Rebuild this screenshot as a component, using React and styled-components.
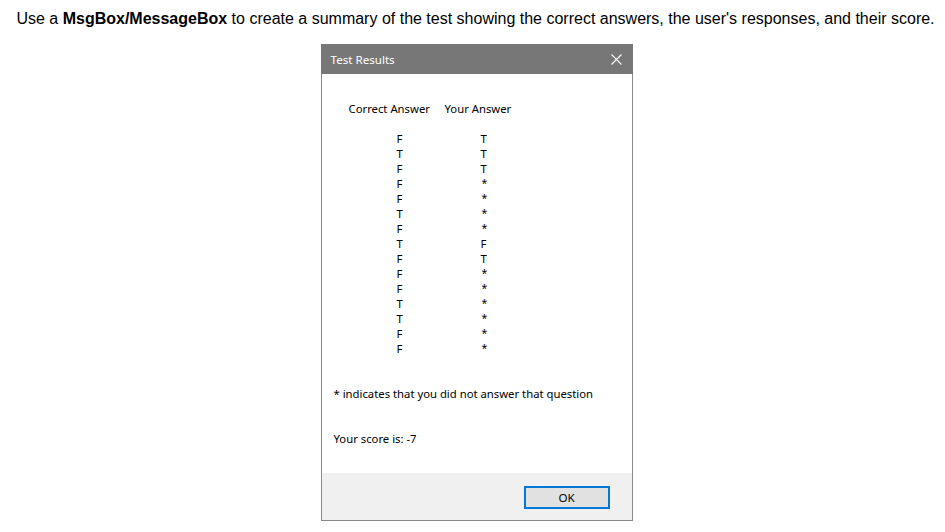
import React from "react";
import styled, { createGlobalStyle } from "styled-components";

const GlobalStyle = createGlobalStyle`
  body {
    margin: 0;
    background: #ffffff;
  }
`;

const answers = [
  ["F", "T"],
  ["T", "T"],
  ["F", "T"],
  ["F", "*"],
  ["F", "*"],
  ["T", "*"],
  ["F", "*"],
  ["T", "F"],
  ["F", "T"],
  ["F", "*"],
  ["F", "*"],
  ["T", "*"],
  ["T", "*"],
  ["F", "*"],
  ["F", "*"],
];

const App = () => {
  return (
    <Page>
      <GlobalStyle />
      <Intro>
        Use a <b>MsgBox/MessageBox</b> to create a summary of the test showing
        the correct answers, the user's responses, and their score.
      </Intro>
      <Dialog>
        <TitleBar>
          <Title>Test Results</Title>
          <CloseButton aria-label="Close">
            <svg width="11" height="11" viewBox="0 0 11 11">
              <path d="M0.5 0.5 L10.5 10.5 M10.5 0.5 L0.5 10.5" stroke="#ffffff" strokeWidth="1.1" fill="none" />
            </svg>
          </CloseButton>
        </TitleBar>
        <Body>
          <HeaderRow>
            <span>Correct Answer</span>
            <span>Your Answer</span>
          </HeaderRow>
          <Answers>
            {answers.map(([correct, yours], i) => (
              <AnswerRow key={i}>
                <span>{correct}</span>
                <Yours $star={yours === "*"}>{yours}</Yours>
              </AnswerRow>
            ))}
          </Answers>
          <Line>* indicates that you did not answer that question</Line>
          <Line>Your score is: -7</Line>
        </Body>
        <Footer>
          <OkButton>OK</OkButton>
        </Footer>
      </Dialog>
    </Page>
  );
};

const Page = styled.div`
  display: flex;
  flex-direction: column;
  align-items: center;
  padding: 10px 0 0 0;
`;

const Intro = styled.p`
  margin: 0 0 16px 6px;
  font-family: "Liberation Sans", Arial, sans-serif;
  font-size: 16px;
  line-height: 18px;
  color: #000000;
  white-space: nowrap;
`;

const Dialog = styled.div`
  width: 312px;
  box-sizing: border-box;
  margin-left: 8px;
  border: 1px solid #8a8a8a;
  border-top: none;
  background: #ffffff;
  font-family: "Noto Sans", "Open Sans", sans-serif;
  font-size: 11.3px;
  color: #000000;
`;

const TitleBar = styled.div`
  height: 30px;
  margin: 0 -1px;
  background: #777777;
  display: flex;
  align-items: center;
  justify-content: space-between;
  padding: 0 11px 0 10px;
`;

const Title = styled.span`
  color: #ffffff;
  font-size: 11.6px;
`;

const CloseButton = styled.span`
  display: flex;
  align-items: center;
  justify-content: center;
`;

const Body = styled.div`
  height: 399px;
  box-sizing: border-box;
  padding: 27px 12px 0 12px;
  line-height: 15px;
`;

const HeaderRow = styled.div`
  display: grid;
  grid-template-columns: 96px auto;
  padding-left: 15px;
  white-space: nowrap;
`;

const Answers = styled.div`
  margin: 15px 0 30px 0;
`;

const AnswerRow = styled.div`
  display: grid;
  grid-template-columns: 84px auto;
  padding-left: 63px;
  height: 15px;
  overflow: hidden;
`;

const Yours = styled.span`
  padding-left: ${(p) => (p.$star ? "1px" : "0")};
  font-size: ${(p) => (p.$star ? "10.5px" : "11.3px")};
`;

const Line = styled.div`
  margin-bottom: 30px;
  white-space: nowrap;
`;

const Footer = styled.div`
  height: 47px;
  box-sizing: border-box;
  background: #f0f0f0;
  display: flex;
  justify-content: flex-end;
  align-items: flex-start;
  padding: 13px 22px 0 0;
`;

const OkButton = styled.button`
  width: 86px;
  height: 23px;
  box-sizing: border-box;
  border: 2px solid #0078d7;
  background: #e1e1e1;
  font-family: "Noto Sans", "Open Sans", sans-serif;
  font-size: 11.6px;
  color: #000000;
  padding: 0;
  cursor: pointer;
`;

export default App;
